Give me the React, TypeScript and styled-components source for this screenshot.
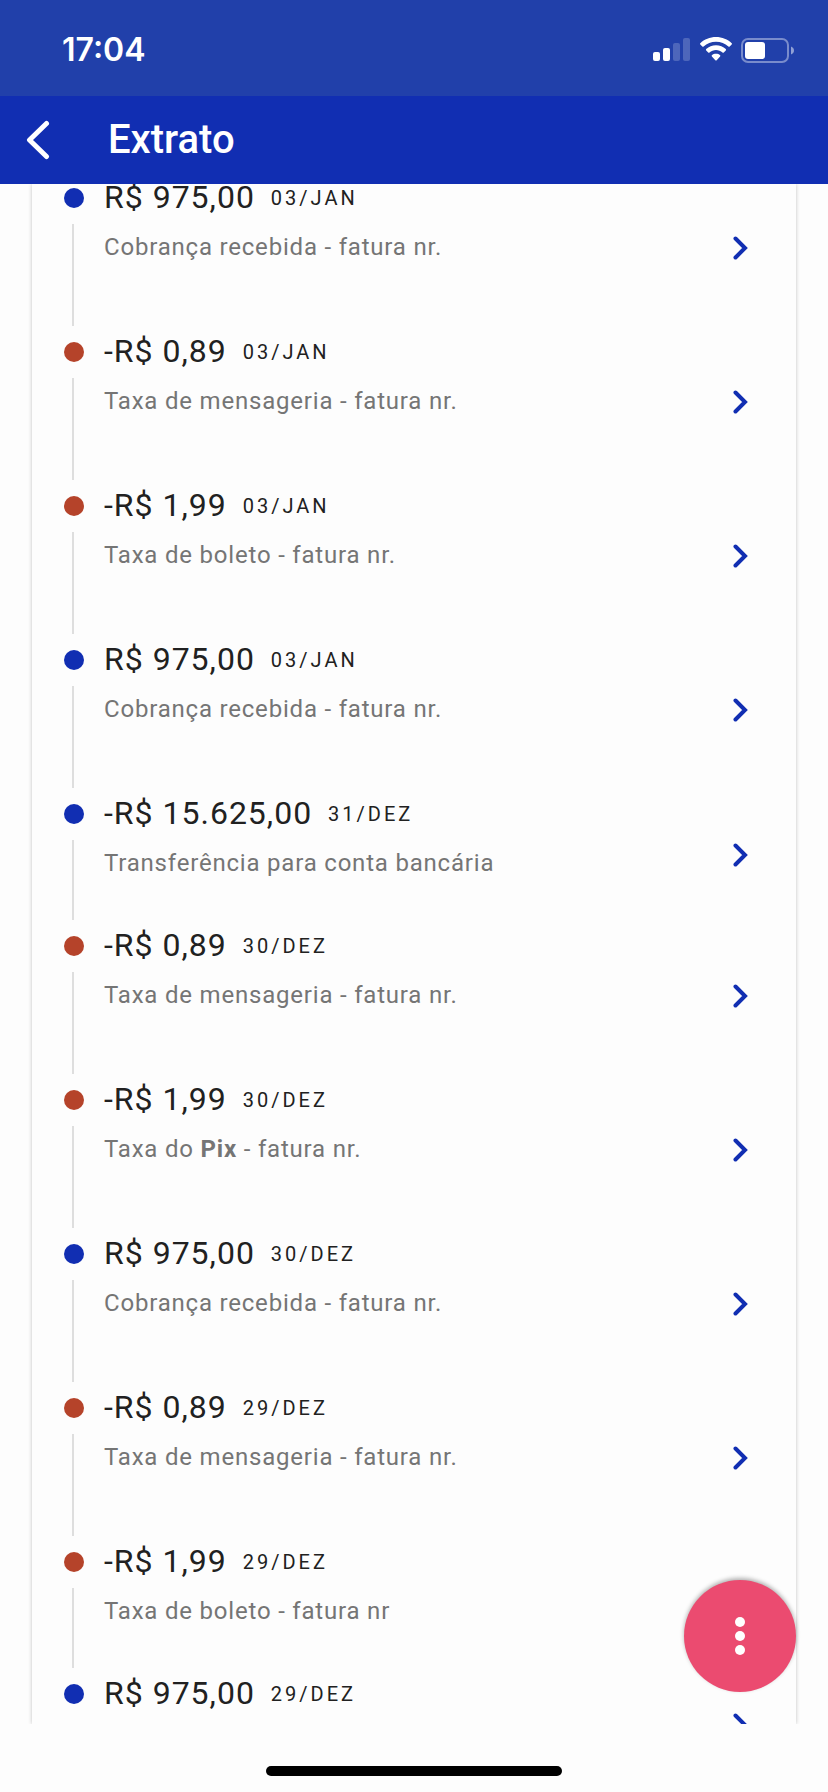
import React from "react";
import styled, { createGlobalStyle } from "styled-components";

const colors = {
  status: "#2140aa",
  brand: "#112eb2",
  fee: "#b5432a",
  accent: "#eb4b70",
  page: "#fdfdfd",
  line: "#dedede",
  text: "#212121",
  muted: "#757575",
};

const GlobalStyle = createGlobalStyle`
  * { box-sizing: border-box; }
  body {
    margin: 0;
    background: ${colors.page};
    color: ${colors.text};
    font-family: Roboto, "Liberation Sans", sans-serif;
  }
  button { font: inherit; color: inherit; border: 0; background: none; cursor: pointer; }
`;

const Screen = styled.div`
  position: relative;
  display: flex;
  flex-direction: column;
  height: 100vh;
  overflow: hidden;
`;

const StatusBar = styled.div`
  flex: none;
  display: flex;
  align-items: center;
  justify-content: space-between;
  height: 96px;
  padding: 4px 34px 0 62px;
  background: ${colors.status};
  color: #fff;
`;

const Clock = styled.time`
  font-family: Inter, Roboto, sans-serif;
  font-size: 32px;
  font-weight: 600;
  line-height: 40px;
`;

const StatusIcons = styled.div`
  display: flex;
  align-items: center;
  gap: 9px;
`;

const AppBar = styled.header`
  flex: none;
  display: flex;
  align-items: center;
  gap: 56px;
  height: 88px;
  padding: 0 24px;
  background: ${colors.brand};
  color: #fff;
`;

const BackButton = styled.button`
  display: flex;
  padding: 0;
`;

const Title = styled.h1`
  margin: 0;
  font-size: 40px;
  font-weight: 500;
  line-height: 48px;
`;

const Scroller = styled.main`
  flex: 1;
  min-height: 0;
  overflow: hidden;
  padding: 0 32px;
`;

const Card = styled.section`
  height: 100%;
  box-shadow: 0 0 4px rgba(0, 0, 0, 0.24);
`;

const Timeline = styled.ol`
  list-style: none;
  margin: 0;
  padding: 0 32px;
  transform: translateY(-6px);
`;

type Size = "tall" | "short" | "bare";

const entryHeight: Record<Size, string> = { tall: "154px", short: "132px", bare: "102px" };
const entryFoot: Record<Size, string> = { tall: "14px", short: "10px", bare: "0" };

const Entry = styled.li<{ $size: Size }>`
  display: flex;
  gap: 20px;
  height: ${(p) => entryHeight[p.$size]};
`;

const Marker = styled.div`
  flex: none;
  display: flex;
  flex-direction: column;
  gap: 16px;
  width: 20px;
  padding: 10px 0 6px;
`;

const Dot = styled.span<{ $fee: boolean }>`
  flex: none;
  width: 20px;
  height: 20px;
  border-radius: 50%;
  background: ${(p) => (p.$fee ? colors.fee : colors.brand)};
`;

const Rail = styled.span`
  flex: 1;
  width: 2px;
  margin-left: 8px;
  background: ${colors.line};
`;

const EntryButton = styled.button<{ $size: Size }>`
  flex: 1;
  display: flex;
  align-items: center;
  justify-content: space-between;
  padding: 0 16px ${(p) => entryFoot[p.$size]} 0;
  text-align: left;
`;

const Details = styled.span`
  align-self: flex-start;
  display: flex;
  flex-direction: column;
  gap: 12px;
`;

const Headline = styled.span`
  display: flex;
  align-items: flex-start;
  gap: 16px;
`;

const Amount = styled.span`
  font-size: 32px;
  line-height: 38px;
  letter-spacing: 1px;
`;

const DateLabel = styled.time`
  font-size: 20px;
  line-height: 40px;
  letter-spacing: 3px;
`;

const Description = styled.span`
  color: ${colors.muted};
  font-size: 24px;
  line-height: 34px;
  letter-spacing: 0.0333em;
`;

const Fab = styled.button`
  position: absolute;
  right: 32px;
  bottom: 100px;
  display: flex;
  align-items: center;
  justify-content: center;
  width: 112px;
  height: 112px;
  padding: 0;
  border-radius: 50%;
  background: ${colors.accent};
  box-shadow: 0 -2px 4px rgba(0, 0, 0, 0.3);
`;

const HomeBar = styled.footer`
  flex: none;
  display: flex;
  justify-content: center;
  align-items: flex-end;
  height: 68px;
  padding-bottom: 16px;
`;

const HomeIndicator = styled.div`
  width: 296px;
  height: 10px;
  border-radius: 5px;
  background: #000;
`;

const SignalIcon = () => (
  <svg width="38" height="24" viewBox="0 0 38 24" fill="#fff" aria-hidden="true">
    <rect x="0" y="14" width="7" height="9" rx="2" />
    <rect x="10" y="10" width="7" height="13" rx="2" />
    <rect x="20" y="5" width="7" height="18" rx="2" opacity="0.2" />
    <rect x="30" y="0" width="7" height="23" rx="2" opacity="0.2" />
  </svg>
);

const WifiIcon = () => (
  <svg width="32" height="26" viewBox="0 0 32 26" fill="#fff" aria-hidden="true">
    <path d="M16 0C9.900 0 4.300 2.300 0.300 6.200c-.4.400-.4.900 0 1.300l2 2c.4.400.9.400 1.300 0C6.900 6.400 11.200 4.700 16 4.700s9.100 1.700 12.400 4.800c.4.400.9.400 1.300 0l2-2c.4-.4.400-.9 0-1.300C27.700 2.300 22.100 0 16 0Z" />
    <path d="M16 8.300c-3.800 0-7.200 1.400-9.800 3.800-.4.400-.4.900 0 1.300l2 2c.4.400.9.400 1.300 0 1.800-1.600 4-2.500 6.500-2.500s4.700.9 6.500 2.500c.4.400.9.400 1.300 0l2-2c.4-.4.400-.9 0-1.300-2.600-2.400-6-3.800-9.800-3.800Z" />
    <path d="M16 16.800c-1.600 0-3 .5-4.100 1.400-.4.300-.4.900 0 1.300l3.400 3.800c.4.400 1 .4 1.400 0l3.400-3.800c.4-.4.400-1 0-1.300-1.100-.9-2.500-1.400-4.100-1.400Z" />
  </svg>
);

const BatteryIcon = () => (
  <svg width="53" height="25" viewBox="0 0 53 25" fill="none" aria-hidden="true">
    <rect x="1" y="1" width="46" height="23" rx="6" stroke="#fff" strokeOpacity="0.4" strokeWidth="2" />
    <rect x="4" y="4" width="20" height="17" rx="3" fill="#fff" />
    <path d="M50 8.500c1.800.7 3 2.200 3 4s-1.200 3.300-3 4Z" fill="#fff" fillOpacity="0.5" />
  </svg>
);

const BackIcon = () => (
  <svg width="28" height="40" viewBox="0 0 28 40" fill="none" aria-hidden="true">
    <path d="M22.500 3.500 5.500 20l17 16.500" stroke="#fff" strokeWidth="5" strokeLinecap="round" strokeLinejoin="round" />
  </svg>
);

const ChevronIcon = () => (
  <svg width="16" height="24" viewBox="0 0 16 24" fill="none" aria-hidden="true">
    <path d="M3.500 2.500 13 12l-9.500 9.500" stroke={colors.brand} strokeWidth="4" strokeLinecap="round" />
  </svg>
);

const MoreIcon = () => (
  <svg width="10" height="38" viewBox="0 0 10 38" fill="#fff" aria-hidden="true">
    <circle cx="5" cy="5" r="5" />
    <circle cx="5" cy="19" r="5" />
    <circle cx="5" cy="33" r="5" />
  </svg>
);

interface Transaction {
  amount: string;
  date: string;
  description?: React.ReactNode;
  fee?: boolean;
  size?: Size;
}

const charge = "Cobrança recebida - fatura nr.";
const messaging = "Taxa de mensageria - fatura nr.";

const transactions: Transaction[] = [
  { amount: "R$ 975,00", date: "03/JAN", description: charge },
  { amount: "-R$ 0,89", date: "03/JAN", description: messaging, fee: true },
  { amount: "-R$ 1,99", date: "03/JAN", description: "Taxa de boleto - fatura nr.", fee: true },
  { amount: "R$ 975,00", date: "03/JAN", description: charge },
  { amount: "-R$ 15.625,00", date: "31/DEZ", description: "Transferência para conta bancária", size: "short" },
  { amount: "-R$ 0,89", date: "30/DEZ", description: messaging, fee: true },
  { amount: "-R$ 1,99", date: "30/DEZ", description: <>Taxa do <b>Pix</b> - fatura nr.</>, fee: true },
  { amount: "R$ 975,00", date: "30/DEZ", description: charge },
  { amount: "-R$ 0,89", date: "29/DEZ", description: messaging, fee: true },
  { amount: "-R$ 1,99", date: "29/DEZ", description: "Taxa de boleto - fatura nr", fee: true, size: "short" },
  { amount: "R$ 975,00", date: "29/DEZ", size: "bare" },
];

const TransactionEntry = ({ amount, date, description, fee = false, size = "tall" }: Transaction) => (
  <Entry $size={size}>
    <Marker>
      <Dot $fee={fee} />
      {size !== "bare" && <Rail />}
    </Marker>
    <EntryButton type="button" $size={size}>
      <Details>
        <Headline>
          <Amount>{amount}</Amount>
          <DateLabel>{date}</DateLabel>
        </Headline>
        {description && <Description>{description}</Description>}
      </Details>
      <ChevronIcon />
    </EntryButton>
  </Entry>
);

export default function App() {
  return (
    <>
      <GlobalStyle />
      <Screen>
        <StatusBar>
          <Clock>17:04</Clock>
          <StatusIcons>
            <SignalIcon />
            <WifiIcon />
            <BatteryIcon />
          </StatusIcons>
        </StatusBar>
        <AppBar>
          <BackButton type="button" aria-label="Voltar">
            <BackIcon />
          </BackButton>
          <Title>Extrato</Title>
        </AppBar>
        <Scroller>
          <Card>
            <Timeline>
              {transactions.map((item, index) => (
                <TransactionEntry key={index} {...item} />
              ))}
            </Timeline>
          </Card>
        </Scroller>
        <HomeBar>
          <HomeIndicator />
        </HomeBar>
        <Fab type="button" aria-label="Mais opções">
          <MoreIcon />
        </Fab>
      </Screen>
    </>
  );
}
